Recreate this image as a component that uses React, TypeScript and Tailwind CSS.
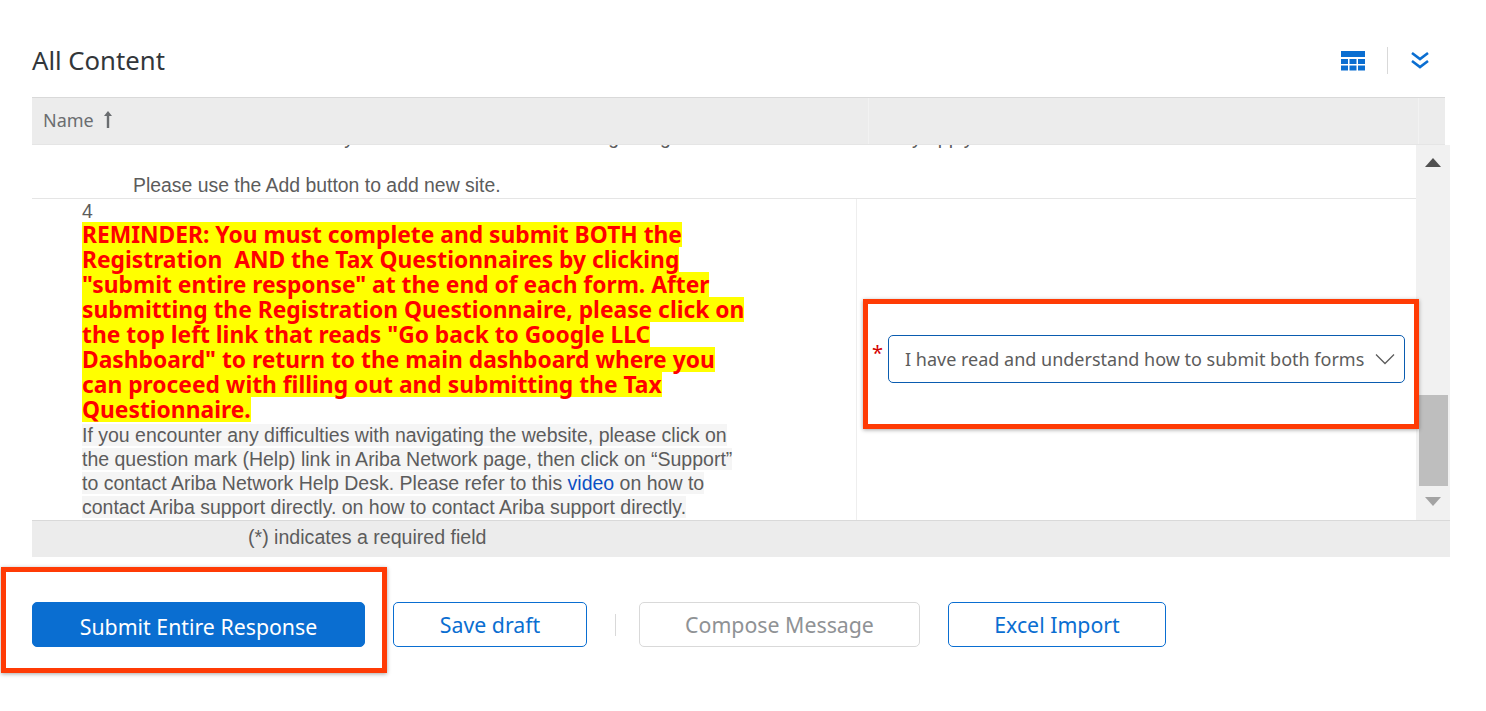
import React from "react";

const reminderLines = [
  "REMINDER: You must complete and submit BOTH the",
  "Registration\u00a0 AND the Tax Questionnaires by clicking",
  "\"submit entire response\" at the end of each form. After",
  "submitting the Registration Questionnaire, please click on",
  "the top left link that reads \"Go back to Google LLC",
  "Dashboard\" to return to the main dashboard where you",
  "can proceed with filling out and submitting the Tax",
  "Questionnaire.",
];

const Btn = ({ label, className }: { label: string; className: string }) => (
  <button className={`h-[45px] rounded-[5px] border text-[21.3px] ${className}`}>
    {label}
  </button>
);

const App = () => {
  return (
    <div className="relative w-[1486px] h-[711px] overflow-hidden bg-white font-['Noto_Sans',sans-serif] text-[#5c5c5c]">
      <div className="flex h-[97px] items-end justify-between pl-8 pr-[56px] pb-[19px]">
        <h1 className="text-[25.7px] leading-[34px] text-[#32363a]">All Content</h1>
        <div className="flex items-center mb-[4px]">
          <svg width="24" height="20" viewBox="0 0 24 20" fill="#0a6ed1">
            <rect x="0" y="0" width="24" height="6" />
            <rect x="0" y="8" width="7" height="5" />
            <rect x="8.5" y="8" width="7" height="5" />
            <rect x="17" y="8" width="7" height="5" />
            <rect x="0" y="14.5" width="7" height="5" />
            <rect x="8.5" y="14.5" width="7" height="5" />
            <rect x="17" y="14.5" width="7" height="5" />
          </svg>
          <div className="mx-[22px] h-[27px] w-px bg-[#d9d9d9]" />
          <svg width="20" height="20" viewBox="0 0 20 20" fill="none" stroke="#0a6ed1" strokeWidth="2.6">
            <path d="M2 2l8 6 8-6" />
            <path d="M2 10l8 6 8-6" />
          </svg>
        </div>
      </div>

      <div className="mx-8 w-[1418px]">
        <div className="flex h-[48px] w-[1413px] border-t border-[#d9d9d9] border-b border-b-[#e5e5e5] bg-[#ececec]">
          <div className="flex w-[836px] items-center pb-[2px] pl-[11px] text-[18px] text-[#6a6d70]">
            Name
            <svg className="ml-[9px]" width="10" height="18" viewBox="0 0 10 18" fill="#6a6d70">
              <path d="M5 0 L9 5 H6.2 V17 H3.8 V5 H1 Z" />
            </svg>
          </div>
          <div className="w-[550px] border-l border-[#f2f2f2]" />
          <div className="flex-1 border-l border-[#f2f2f2]" />
        </div>

        <div className="flex h-[375px]">
          <div className="w-[1384px] overflow-hidden">
            {/* previous row is scrolled, only the last lines stay visible */}
            <div className="-mt-[20px] h-[74px] border-b border-[#e5e5e5] pl-[101px] font-['Liberation_Sans',sans-serif] text-[19.4px] leading-[24px]">
              <div className="h-[24px] whitespace-nowrap">
                Please indicate whether you have other locations trading using the different names that may apply.
              </div>
              <div className="h-[24px]" />
              <div className="h-[24px]">Please use the Add button to add new site.</div>
            </div>
            <div className="flex h-[321px]">
              <div className="w-[825px] pl-[50px] border-r border-[#eeeeee]">
                <div className="font-['Liberation_Sans',sans-serif] text-[19.4px] leading-[22px] mt-[1px]">4</div>
                <div className="text-[22.8px] leading-[25px] font-bold text-[#ff0000]">
                  {reminderLines.map((line) => (
                    <div key={line} className="w-fit whitespace-nowrap bg-[#ffff00]">
                      {line}
                    </div>
                  ))}
                </div>
                <p className="mt-[1px] w-[660px] font-['Liberation_Sans',sans-serif] text-[19.5px] leading-[24px]">
                  <span className="bg-[#f5f5f5]">
                    If you encounter any difficulties with navigating the website, please click on the question mark (Help) link in Ariba Network page, then click on “Support” to contact Ariba Network Help Desk. Please refer to this <span className="text-[#0a4fc4]">video</span> on how to contact Ariba support directly. on how to contact Ariba support directly.
                  </span>
                </p>
              </div>
              <div className="flex flex-1 items-center pl-[15px] pb-[1px]">
                <span className="mb-[12px] mr-[5px] text-[20px] leading-none text-[#d40000]">*</span>
                <div className="flex h-[48px] w-[517px] items-center justify-between rounded-[5px] border border-[#0a5cb0] pl-4 pr-[9px] text-[18px]">
                  <span className="whitespace-nowrap">I have read and understand how to submit both forms</span>
                  <svg width="20" height="12" viewBox="0 0 20 12" fill="none" stroke="#5c5c5c" strokeWidth="1.3">
                    <path d="M1 1.5l9 9 9-9" />
                  </svg>
                </div>
              </div>
            </div>
          </div>
          <div className="flex w-[34px] flex-col items-center bg-[#f1f1f1]">
            <svg className="mt-[13px]" width="16" height="9" viewBox="0 0 16 9" fill="#505050">
              <path d="M8 0l8 9H0z" />
            </svg>
            <div className="ml-[1px] mt-[228px] h-[91px] w-[29px] bg-[#bebebe]" />
            <svg className="mt-[11px]" width="16" height="9" viewBox="0 0 16 9" fill="#a3a3a3">
              <path d="M0 0h16L8 9z" />
            </svg>
          </div>
        </div>

        <div className="flex h-[37px] items-center border-t border-[#d9d9d9] bg-[#ececec] pb-[3px] pl-[216px] font-['Liberation_Sans',sans-serif] text-[19.6px]">
          (*) indicates a required field
        </div>
      </div>

      <div className="mt-[45px] flex items-center pl-8">
        <Btn label="Submit Entire Response" className="w-[333px] border-[#0a6ed1] bg-[#0a6ed1] pt-[4px] text-white" />
        <Btn label="Save draft" className="ml-7 w-[194px] border-[#0a6ed1] bg-white pt-[1px] text-[#0a6ed1]" />
        <div className="ml-7 mr-[23px] h-[22px] w-px bg-[#d9d9d9]" />
        <Btn label="Compose Message" className="w-[281px] border-[#d9d9d9] bg-white pt-[1px] text-[#8f9295]" />
        <Btn label="Excel Import" className="ml-7 w-[218px] border-[#0a6ed1] bg-white pt-[1px] text-[#0a6ed1]" />
      </div>

      {/* annotation boxes on top of the screenshot */}
      <div className="absolute left-[863px] top-[299px] h-[130px] w-[556px] border-[5px] border-[#ff3b05] shadow-[0_1px_4px_rgba(0,0,0,0.35)]" />
      <div className="absolute left-[1px] top-[567px] h-[106px] w-[386px] border-[5px] border-[#ff3b05] shadow-[0_1px_4px_rgba(0,0,0,0.35)]" />
    </div>
  );
};

export default App;
